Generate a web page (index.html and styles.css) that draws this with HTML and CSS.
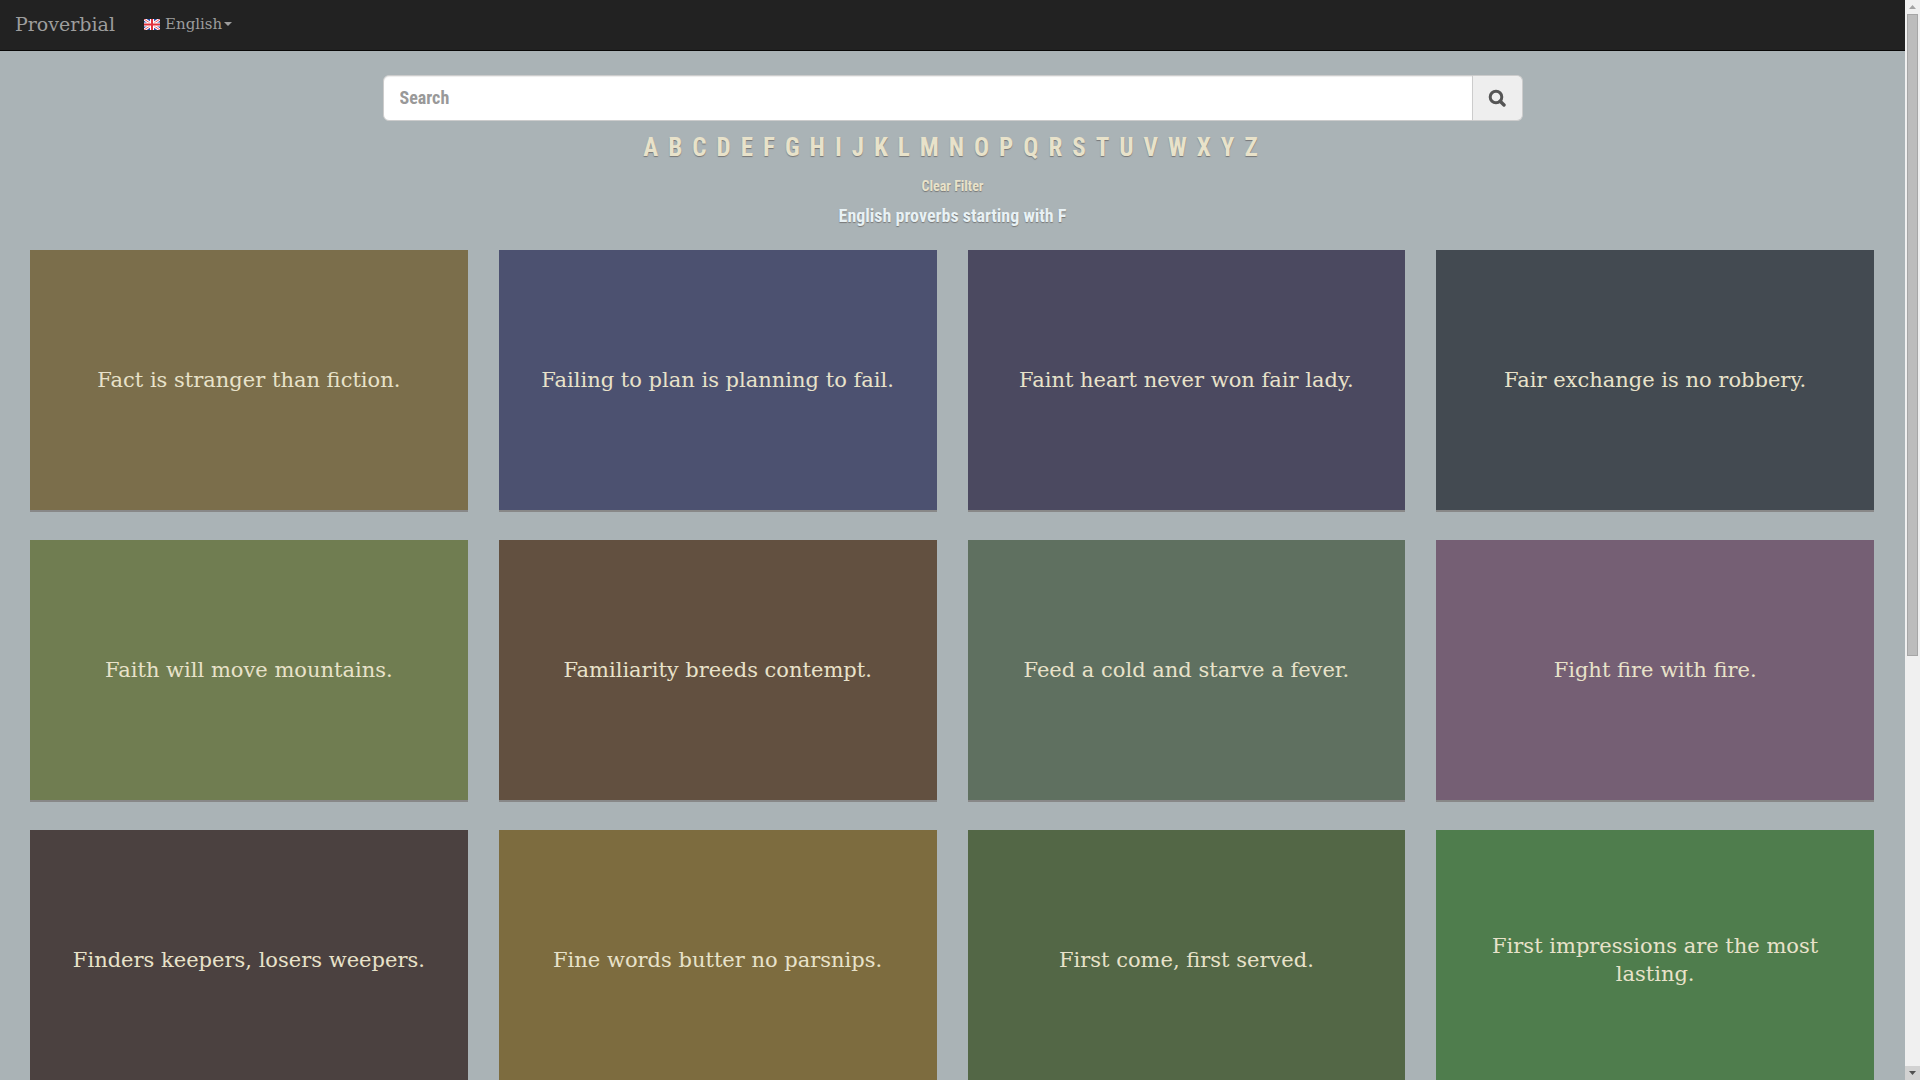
FILE: index.html
```html
<!DOCTYPE html>
<html lang="en">
<head>
<meta charset="utf-8">
<meta name="viewport" content="width=device-width, initial-scale=1">
<title>Proverbial</title>
<link rel="stylesheet" href="styles.css">
</head>
<body>
<div class="page">
  <nav class="navbar">
    <a class="brand" href="#">Proverbial</a>
    <button class="language" type="button">
      <svg class="flag" width="16" height="11" viewBox="0 0 16 11" aria-hidden="true">
        <rect width="16" height="11" fill="#2c4aa8"/>
        <path d="M0 0L16 11M16 0L0 11" stroke="#fff" stroke-width="3"/>
        <path d="M0 0L16 11M16 0L0 11" stroke="#f0505a" stroke-width="1"/>
        <path d="M8 0V11M0 5.5H16" stroke="#fff" stroke-width="4"/>
        <path d="M8 0V11M0 5.5H16" stroke="#e2323e" stroke-width="2"/>
      </svg>
      <span>English</span>
      <span class="caret"></span>
    </button>
  </nav>
  <header class="filters">
    <form class="search" role="search">
      <input class="search-input" type="text" placeholder="Search" aria-label="Search">
      <button class="search-button" type="button" aria-label="Submit search">
        <svg width="18" height="18" viewBox="0 0 18 18" fill="none" stroke="#555" aria-hidden="true">
          <circle cx="8" cy="8" r="5.8" stroke-width="3"/>
          <path d="M12.2 12.2L16 16" stroke-width="3.4" stroke-linecap="round"/>
        </svg>
      </button>
    </form>
    <div class="letters">
      <a href="#">A</a>
      <a href="#">B</a>
      <a href="#">C</a>
      <a href="#">D</a>
      <a href="#">E</a>
      <a href="#">F</a>
      <a href="#">G</a>
      <a href="#">H</a>
      <a href="#">I</a>
      <a href="#">J</a>
      <a href="#">K</a>
      <a href="#">L</a>
      <a href="#">M</a>
      <a href="#">N</a>
      <a href="#">O</a>
      <a href="#">P</a>
      <a href="#">Q</a>
      <a href="#">R</a>
      <a href="#">S</a>
      <a href="#">T</a>
      <a href="#">U</a>
      <a href="#">V</a>
      <a href="#">W</a>
      <a href="#">X</a>
      <a href="#">Y</a>
      <a href="#">Z</a>
    </div>
    <a class="clear" href="#">Clear Filter</a>
    <h1 class="heading">English proverbs starting with F</h1>
  </header>
  <main class="cards">
    <a class="card tan" href="#">Fact is stranger than fiction.</a>
    <a class="card indigo" href="#">Failing to plan is planning to fail.</a>
    <a class="card violet" href="#">Faint heart never won fair lady.</a>
    <a class="card slate" href="#">Fair exchange is no robbery.</a>
    <a class="card olive" href="#">Faith will move mountains.</a>
    <a class="card brown" href="#">Familiarity breeds contempt.</a>
    <a class="card sage" href="#">Feed a cold and starve a fever.</a>
    <a class="card mauve" href="#">Fight fire with fire.</a>
    <a class="card umber" href="#">Finders keepers, losers weepers.</a>
    <a class="card gold" href="#">Fine words butter no parsnips.</a>
    <a class="card moss" href="#">First come, first served.</a>
    <a class="card green" href="#">First impressions are the most lasting.</a>
  </main>
</div>
<div class="scrollbar" aria-hidden="true">
  <div class="step"><svg width="7" height="4" viewBox="0 0 7 4"><path d="M3.5 0L7 4H0Z" fill="#a3a3a3"/></svg></div>
  <div class="track"><div class="thumb"></div></div>
  <div class="step down"><svg width="7" height="4" viewBox="0 0 7 4"><path d="M3.5 4L7 0H0Z" fill="#505050"/></svg></div>
</div>
</body>
</html>
```
FILE: styles.css
```css
* { box-sizing: border-box; }

body {
  display: flex;
  height: 100vh;
  margin: 0;
  overflow: hidden;
  background: #aab3b6;
  font-family: "DejaVu Serif", serif;
}

a { color: inherit; text-decoration: none; }

.page {
  flex: 1;
  min-width: 0;
  overflow-y: auto;
  scrollbar-width: none;
}

.navbar {
  display: flex;
  align-items: center;
  gap: 29px;
  height: 51px;
  padding: 0 15px 2px;
  background: #222;
  border-bottom: 1px solid #080808;
  color: #9d9d9d;
}

.brand { font-size: 19px; line-height: 20px; }

.language {
  display: flex;
  align-items: center;
  padding: 0;
  border: 0;
  background: none;
  color: inherit;
  font: 15px/20px "DejaVu Serif", serif;
}

.flag { margin-right: 5px; }

.caret {
  margin-left: 2px;
  border: 4px solid transparent;
  border-top-color: #9d9d9d;
  border-bottom: 0;
}

.filters {
  display: flex;
  flex-direction: column;
  align-items: center;
  padding: 24px 15px;
  font-family: "Roboto Condensed", "Liberation Sans Narrow", sans-serif;
  font-weight: 700;
  color: #e8e2ca;
  text-shadow: 0 1px 1px #777;
}

.search {
  display: flex;
  width: 100%;
  max-width: 1140px;
  height: 46px;
}

.search-input {
  flex: 1;
  min-width: 0;
  padding: 8px 16px 10px;
  border: 1px solid #ccc;
  border-radius: 6px 0 0 6px;
  background: #fff;
  box-shadow: inset 0 1px 1px rgba(0, 0, 0, 0.075);
  color: #555;
  font: inherit;
  font-size: 18px;
}

.search-input::placeholder { color: #999; opacity: 1; }

.search-button {
  display: flex;
  align-items: center;
  justify-content: center;
  width: 50px;
  padding: 0;
  border: 1px solid #ccc;
  border-left: 0;
  border-radius: 0 6px 6px 0;
  background: #eee;
}

.letters {
  display: flex;
  flex-wrap: wrap;
  justify-content: center;
  gap: 10px;
  margin-top: 10px;
  padding-right: 4px;
  font-size: 25px;
  line-height: 34px;
}

.clear { margin-top: 11px; font-size: 14px; line-height: 20px; }

.heading {
  margin: 10px 0 0;
  color: #e8f1f4;
  font-size: 18px;
  line-height: 20px;
}

.cards {
  display: grid;
  grid-template-columns: repeat(4, minmax(0, 1fr));
  gap: 28px 31px;
  padding: 0 31px 28px 30px;
}

.card {
  display: flex;
  align-items: center;
  justify-content: center;
  height: 262px;
  padding: 0 40px;
  border-bottom: 2px solid #888;
  color: #e8e2ca;
  font-size: 21px;
  line-height: 28px;
  text-align: center;
}

.tan { background: #7b6e4b; }
.indigo { background: #4c5170; }
.violet { background: #4b4960; }
.slate { background: #434a51; }
.olive { background: #707d51; }
.brown { background: #625040; }
.sage { background: #5f7060; }
.mauve { background: #755f74; }
.umber { background: #4b4140; }
.gold { background: #7d6c3f; }
.moss { background: #536746; }
.green { background: #4f7d4d; }

.scrollbar {
  display: flex;
  flex-direction: column;
  width: 15px;
  background: #f0f0f0;
}

.step {
  display: flex;
  align-items: center;
  justify-content: center;
  height: 14px;
}

.down { background: #d2d2d2; }

.track { flex: 1; padding: 0 2px; }

.thumb {
  height: 61%;
  border: 1px solid #a6a6a6;
  background: #bcbcbc;
}
```
